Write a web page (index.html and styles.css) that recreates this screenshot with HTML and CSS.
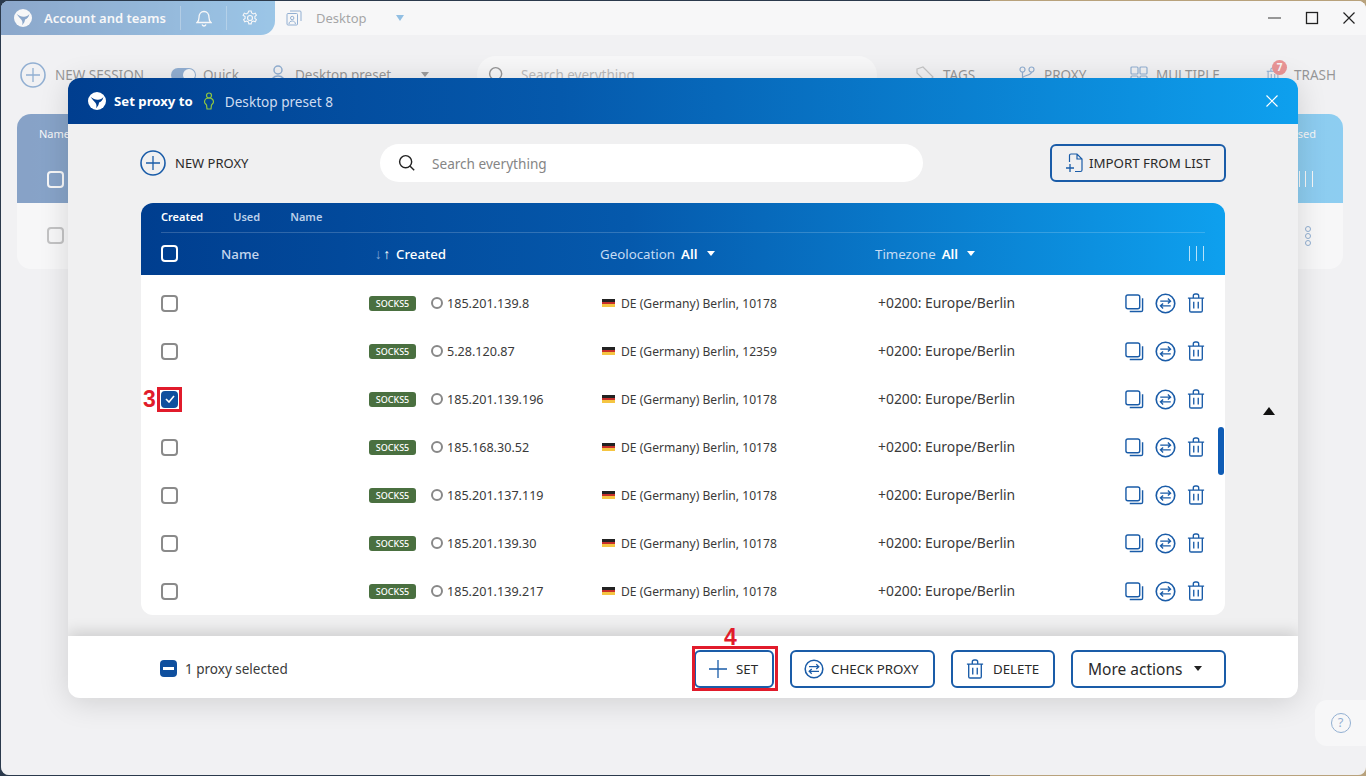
FILE: index.html
```html
<!DOCTYPE html>
<html lang="en">
<head>
<meta charset="utf-8">
<title>Set proxy</title>
<link rel="stylesheet" href="styles.css">
</head>
<body>
<svg class="defs" width="0" height="0" aria-hidden="true">
  <symbol id="logo" viewBox="0 0 24 24">
    <circle cx="12" cy="12" r="12" fill="#fff"/>
    <path d="M3.500 6.500c3 2.200 6 3.400 9 3.800 3.200.3 6-.8 8-3.600-.6 3.600-2.600 6.200-5.800 7.400-.2 2.800-1.400 5.200-4 7.400 1-2.800.8-5-.6-7-1.200-1.800-3.800-3.800-6.600-8z" fill="currentColor"/>
  </symbol>
  <symbol id="plusc" viewBox="0 0 26 26">
    <circle cx="13" cy="13" r="12" fill="none" stroke="currentColor" stroke-width="1.600"/>
    <path d="M13 6v14M6 13h14" fill="none" stroke="currentColor" stroke-width="1.300"/>
  </symbol>
  <symbol id="copy" viewBox="0 0 20 20">
    <rect x="1" y="1" width="14.500" height="14.500" rx="2" fill="none" stroke="currentColor" stroke-width="1.500"/>
    <path d="M18.500 4.500v12.500a1.500 1.500 0 0 1-1.500 1.500H5" fill="none" stroke="currentColor" stroke-width="1.500"/>
  </symbol>
  <symbol id="swap" viewBox="0 0 22 22">
    <circle cx="11" cy="11" r="9.700" fill="none" stroke="currentColor" stroke-width="1.700"/>
    <path d="M5.500 8.500h10.500M13.500 5.700l2.800 2.800-2.800 2.500M16.500 13.500H6M8.500 10.900l-2.800 2.600 2.800 2.800" fill="none" stroke="currentColor" stroke-width="1.400"/>
  </symbol>
  <symbol id="trash" viewBox="0 0 20 22">
    <path d="M1 5.500h18M7 5.500V3.200C7 2 8 1 9.200 1h1.600C12 1 13 2 13 3.200v2.300M3 5.500v14c0 .9.600 1.500 1.500 1.500h11c.9 0 1.500-.6 1.500-1.500v-14M7.500 9.500v7.500M12.500 9.500v7.500" fill="none" stroke="currentColor" stroke-width="1.500"/>
  </symbol>
  <symbol id="search" viewBox="0 0 20 20">
    <circle cx="8.500" cy="8.500" r="6.700" fill="none" stroke="currentColor" stroke-width="1.600"/>
    <path d="M13.500 13.500l4.500 4.500" fill="none" stroke="currentColor" stroke-width="1.600"/>
  </symbol>
</svg>

<div class="window">
  <header class="titlebar">
    <div class="account-tab">
      <svg class="logo-sm"><use href="#logo"/></svg>
      <span class="account-name">Account and teams</span>
      <span class="tab-icon">
        <svg width="16" height="18" viewBox="0 0 16 18"><path d="M1 13.500c1.500-1 2-2.500 2-5 0-3.500 2-6 5-6s5 2.500 5 6c0 2.500.5 4 2 5zM6 15.500c.5 1 1.200 1.500 2 1.500s1.500-.5 2-1.500" fill="none" stroke="#fff" stroke-width="1.300"/></svg>
      </span>
      <span class="tab-icon">
        <svg width="16" height="16" viewBox="0 0 16 16"><circle cx="8" cy="8" r="2.500" fill="none" stroke="#fff" stroke-width="1.200"/><path d="M6.800 1h2.400l.4 2 1.800.9 1.800-.8 1.200 2.100-1.500 1.300v1.900l1.500 1.300-1.200 2.100-1.800-.8-1.800.9-.4 2H6.800l-.4-2-1.800-.9-1.800.8-1.200-2.100 1.500-1.300V6.500L1.100 5.200l1.200-2.100 1.800.8 1.800-.9z" fill="none" stroke="#fff" stroke-width="1.100"/></svg>
      </span>
    </div>
    <div class="desktop-tab">
      <svg class="desktop-icon" width="16" height="16" viewBox="0 0 16 16"><rect x="1" y="3.500" width="10.500" height="11.500" rx="1" fill="none" stroke="#1a5ca8" stroke-width="1"/><path d="M4 1h10a1 1 0 0 1 1 1v9" fill="none" stroke="#1a5ca8" stroke-width="1"/><circle cx="6.200" cy="8" r="1.700" fill="none" stroke="#1a5ca8"/><path d="M3 14c0-2 1.500-3 3.200-3s3.200 1 3.200 3" fill="none" stroke="#1a5ca8"/></svg>
      <span class="desktop-label">Desktop</span>
      <span class="desktop-caret"></span>
    </div>
  </header>

  <div class="toolbar">
    <svg class="tool-plus"><use href="#plusc"/></svg>
    <span class="tool-text tool-new">NEW SESSION</span>
    <span class="toggle"></span>
    <span class="tool-text tool-quick">Quick</span>
    <svg class="tool-person" width="18" height="22" viewBox="0 0 18 22"><circle cx="9" cy="6" r="4" fill="none" stroke="#1a5ca8" stroke-width="1.500"/><path d="M2 21c0-6 3-9 7-9s7 3 7 9" fill="none" stroke="#1a5ca8" stroke-width="1.500"/></svg>
    <span class="tool-text tool-preset">Desktop preset</span>
    <span class="tool-caret"></span>
    <div class="tool-search">
      <svg class="tool-search-icon"><use href="#search"/></svg>
      <span class="tool-search-text">Search everything</span>
    </div>
    <svg class="tool-ic tool-ic-tags" width="18" height="18" viewBox="0 0 18 18"><path d="M1 3l6-2 10 10-6 6L1 7z" fill="none" stroke="#8a8a8a" stroke-width="1.200"/></svg>
    <span class="tool-text tool-tags">TAGS</span>
    <svg class="tool-ic tool-ic-proxy" width="16" height="18" viewBox="0 0 16 18"><circle cx="3.500" cy="3.500" r="2.500" fill="none" stroke="#1a5ca8" stroke-width="1.200"/><circle cx="12.500" cy="3.500" r="2.500" fill="none" stroke="#1a5ca8" stroke-width="1.200"/><path d="M3.500 6v11M12.500 6c0 4-9 3-9 6" fill="none" stroke="#1a5ca8" stroke-width="1.200"/></svg>
    <span class="tool-text tool-proxy">PROXY</span>
    <svg class="tool-ic tool-ic-multi" width="18" height="18" viewBox="0 0 18 18"><rect x="1" y="1" width="7" height="7" rx="1" fill="none" stroke="#1a5ca8" stroke-width="1.200"/><rect x="10" y="1" width="7" height="7" rx="1" fill="none" stroke="#1a5ca8" stroke-width="1.200"/><rect x="1" y="10" width="7" height="7" rx="1" fill="none" stroke="#1a5ca8" stroke-width="1.200"/><rect x="10" y="10" width="7" height="7" rx="1" fill="none" stroke="#1a5ca8" stroke-width="1.200"/></svg>
    <span class="tool-text tool-multi">MULTIPLE</span>
    <span class="tool-trash">
      <svg class="tool-trash-icon" width="14" height="16"><use href="#trash"/></svg>
      <span class="tool-badge">7</span>
    </span>
    <span class="tool-text tool-trash-text">TRASH</span>
  </div>

  <section class="bg-table">
    <div class="bg-head">
      <span class="bg-label">Name</span>
      <span class="bg-label">Used</span>
      <span class="bg-box"></span>
      <span class="bg-bars"></span>
    </div>
    <div class="bg-row">
      <span class="bg-box bg-box-row"></span>
      <span class="bg-dots"><i></i><i></i><i></i></span>
    </div>
  </section>

  <div class="help"><span class="help-mark">?</span></div>

  <div class="scrim"></div>

  <div class="win-controls">
    <svg width="14" height="14" viewBox="0 0 14 14"><path d="M0 7h13" stroke="#777" stroke-width="1.500"/></svg>
    <svg width="14" height="14" viewBox="0 0 14 14"><rect x="1.500" y="1.500" width="11" height="11" fill="none" stroke="#222" stroke-width="1.300"/></svg>
    <svg width="14" height="14" viewBox="0 0 14 14"><path d="M1.500 1.500l11 11M12.500 1.500l-11 11" stroke="#222" stroke-width="1.200"/></svg>
  </div>

  <div class="cursor-mark"></div>

  <main class="modal">
    <div class="modal-head">
      <svg class="logo-md"><use href="#logo"/></svg>
      <span class="modal-title">Set proxy to</span>
      <svg class="modal-person" width="12" height="18" viewBox="0 0 12 18"><circle cx="6" cy="3.500" r="2.500" fill="none" stroke="#8fc640" stroke-width="1.200"/><path d="M6 6c-3 0-4.500 2-4.500 4 0 1.500 1.500 2 2 3l.5 4h4l.5-4c.5-1 2-1.500 2-3 0-2-1.500-4-4.500-4z" fill="none" stroke="#8fc640" stroke-width="1.200"/></svg>
      <span class="modal-preset">Desktop preset 8</span>
      <svg class="modal-close" width="14" height="14" viewBox="0 0 14 14"><path d="M1.500 1.500l11 11M12.500 1.500l-11 11" stroke="#fff" stroke-width="1.200"/></svg>
    </div>

    <div class="modal-body">
      <div class="proxy-tools">
        <div class="new-proxy">
          <svg class="new-proxy-icon"><use href="#plusc"/></svg>
          <span>NEW PROXY</span>
        </div>
        <div class="search">
          <svg class="search-icon"><use href="#search"/></svg>
          <span>Search everything</span>
        </div>
        <div class="btn btn-import">
          <svg width="18" height="20" viewBox="0 0 18 20"><path d="M6 1h6l5 5v11a1.500 1.500 0 0 1-1.500 1.500H10M12 1v5h5M6 1a1.500 1.500 0 0 0-1.500 1.500V9" fill="none" stroke="#1a5ca8" stroke-width="1.200"/><path d="M5 11v8M1 15h8" fill="none" stroke="#1a5ca8" stroke-width="1.300"/></svg>
          <span>IMPORT FROM LIST</span>
        </div>
      </div>

      <section class="table">
        <div class="table-head">
          <div class="sort-tabs">
            <span class="sort-tab sort-active">Created</span>
            <span class="sort-tab">Used</span>
            <span class="sort-tab">Name</span>
          </div>
          <div class="row head-row">
            <span class="check check-head"></span>
            <span class="col-label">Name</span>
            <span class="col-created"><span class="arrow arrow-dim">↓</span><span class="arrow">↑</span><b>Created</b></span>
            <span class="col-filter">Geolocation<b>All</b><i class="tri"></i></span>
            <span class="col-filter">Timezone<b>All</b><i class="tri"></i></span>
            <span class="bars"><i></i><i></i><i></i></span>
          </div>
        </div>

        <div class="table-rows">
          <div class="row">
            <span class="check"></span><span></span>
            <span class="cell-proxy"><span class="badge">SOCKS5</span><i class="radio"></i>185.201.139.8</span>
            <span class="cell-geo"><i class="flag"></i>DE (Germany) Berlin, 10178</span>
            <span class="cell-tz">+0200: Europe/Berlin</span>
            <span class="actions"><svg class="a-copy"><use href="#copy"/></svg><svg class="a-swap"><use href="#swap"/></svg><svg class="a-trash"><use href="#trash"/></svg></span>
          </div>
          <div class="row">
            <span class="check"></span><span></span>
            <span class="cell-proxy"><span class="badge">SOCKS5</span><i class="radio"></i>5.28.120.87</span>
            <span class="cell-geo"><i class="flag"></i>DE (Germany) Berlin, 12359</span>
            <span class="cell-tz">+0200: Europe/Berlin</span>
            <span class="actions"><svg class="a-copy"><use href="#copy"/></svg><svg class="a-swap"><use href="#swap"/></svg><svg class="a-trash"><use href="#trash"/></svg></span>
          </div>
          <div class="row">
            <span class="check check-on">
              <svg width="10" height="8" viewBox="0 0 10 8"><path d="M1 4l3 3 5-6" fill="none" stroke="#fff" stroke-width="1.600"/></svg>
              <span class="step step-3">3</span>
            </span><span></span>
            <span class="cell-proxy"><span class="badge">SOCKS5</span><i class="radio"></i>185.201.139.196</span>
            <span class="cell-geo"><i class="flag"></i>DE (Germany) Berlin, 10178</span>
            <span class="cell-tz">+0200: Europe/Berlin</span>
            <span class="actions"><svg class="a-copy"><use href="#copy"/></svg><svg class="a-swap"><use href="#swap"/></svg><svg class="a-trash"><use href="#trash"/></svg></span>
          </div>
          <div class="row">
            <span class="check"></span><span></span>
            <span class="cell-proxy"><span class="badge">SOCKS5</span><i class="radio"></i>185.168.30.52</span>
            <span class="cell-geo"><i class="flag"></i>DE (Germany) Berlin, 10178</span>
            <span class="cell-tz">+0200: Europe/Berlin</span>
            <span class="actions"><svg class="a-copy"><use href="#copy"/></svg><svg class="a-swap"><use href="#swap"/></svg><svg class="a-trash"><use href="#trash"/></svg></span>
          </div>
          <div class="row">
            <span class="check"></span><span></span>
            <span class="cell-proxy"><span class="badge">SOCKS5</span><i class="radio"></i>185.201.137.119</span>
            <span class="cell-geo"><i class="flag"></i>DE (Germany) Berlin, 10178</span>
            <span class="cell-tz">+0200: Europe/Berlin</span>
            <span class="actions"><svg class="a-copy"><use href="#copy"/></svg><svg class="a-swap"><use href="#swap"/></svg><svg class="a-trash"><use href="#trash"/></svg></span>
          </div>
          <div class="row">
            <span class="check"></span><span></span>
            <span class="cell-proxy"><span class="badge">SOCKS5</span><i class="radio"></i>185.201.139.30</span>
            <span class="cell-geo"><i class="flag"></i>DE (Germany) Berlin, 10178</span>
            <span class="cell-tz">+0200: Europe/Berlin</span>
            <span class="actions"><svg class="a-copy"><use href="#copy"/></svg><svg class="a-swap"><use href="#swap"/></svg><svg class="a-trash"><use href="#trash"/></svg></span>
          </div>
          <div class="row">
            <span class="check"></span><span></span>
            <span class="cell-proxy"><span class="badge">SOCKS5</span><i class="radio"></i>185.201.139.217</span>
            <span class="cell-geo"><i class="flag"></i>DE (Germany) Berlin, 10178</span>
            <span class="cell-tz">+0200: Europe/Berlin</span>
            <span class="actions"><svg class="a-copy"><use href="#copy"/></svg><svg class="a-swap"><use href="#swap"/></svg><svg class="a-trash"><use href="#trash"/></svg></span>
          </div>
          <div class="scrollbar"></div>
        </div>
      </section>
    </div>

    <footer class="modal-foot">
      <div class="selected">
        <span class="check-minus"><i></i></span>
        <span>1 proxy selected</span>
      </div>
      <div class="foot-actions">
        <div class="btn btn-set">
          <svg width="18" height="18" viewBox="0 0 18 18"><path d="M9 0v18M0 9h18" fill="none" stroke="#1a5ca8" stroke-width="1.300"/></svg>
          <span>SET</span>
          <span class="step step-4">4</span>
        </div>
        <div class="btn btn-check">
          <svg width="20" height="20"><use href="#swap"/></svg>
          <span>CHECK PROXY</span>
        </div>
        <div class="btn btn-delete">
          <svg width="18" height="20"><use href="#trash"/></svg>
          <span>DELETE</span>
        </div>
        <div class="btn btn-more">
          <span>More actions</span>
          <i class="tri tri-dark"></i>
        </div>
      </div>
    </footer>
  </main>
</div>
</body>
</html>
```

FILE: styles.css
```css
*, *::before, *::after { box-sizing: border-box; }
html, body { margin: 0; height: 100%; }
body {
  width: 1366px;
  height: 776px;
  overflow: hidden;
  padding: 1px 0 1px 1px;
  background: linear-gradient(90deg, #2b3a4c 0, #2b3a4c 990px, #b8a27c 990px, #b8a27c 100%);
  font-family: "Noto Sans", "Liberation Sans", sans-serif;
  color: #333;
}
.defs { position: absolute; }
i { font-style: normal; display: block; }
b { font-weight: 600; }

.window {
  position: relative;
  width: 1365px;
  height: 774px;
  border-radius: 8px;
  overflow: hidden;
  background: #f1f2f3;
}

/* title bar (behind the dialog) */
.titlebar { display: flex; height: 34px; background: #fff; }
.account-tab {
  display: flex;
  align-items: center;
  width: 274px;
  padding-left: 13px;
  color: #fff;
  background: linear-gradient(90deg, #0b4a98, #2f8fd8);
  border-radius: 0 0 14px 0;
  font-size: 13px;
  font-weight: 600;
}
.logo-sm { width: 18px; height: 18px; color: #0b4a98; flex: none; }
.account-name { margin-left: 12px; width: 136px; }
.tab-icon {
  display: flex;
  justify-content: center;
  width: 46px;
  border-left: 1px solid rgba(255,255,255,.3);
  height: 24px;
  align-items: center;
}
.desktop-tab { display: flex; align-items: center; padding-left: 11px; font-size: 13px; }
.desktop-label { margin-left: 14px; color: #444; }
.desktop-caret {
  margin-left: 29px;
  border-left: 4px solid transparent;
  border-right: 4px solid transparent;
  border-top: 6px solid #1a7fd0;
}

/* main toolbar (behind the dialog) */
.toolbar {
  display: flex;
  align-items: center;
  height: 79px;
  padding-left: 19px;
  font-size: 13.500px;
  color: #222;
}
.tool-text { white-space: nowrap; }
.tool-plus { width: 26px; height: 26px; color: #1a5ca8; flex: none; }
.tool-new { margin-left: 9px; width: 116px; }
.toggle {
  position: relative;
  width: 25px;
  height: 14px;
  border-radius: 8px;
  background: #1a5ca8;
}
.toggle::after {
  content: "";
  position: absolute;
  right: 1px;
  top: 1px;
  width: 12px;
  height: 12px;
  border-radius: 50%;
  background: #fff;
}
.tool-quick { margin-left: 7px; width: 66px; }
.tool-person { flex: none; }
.tool-preset { margin-left: 8px; width: 126px; }
.tool-caret {
  border-left: 4px solid transparent;
  border-right: 4px solid transparent;
  border-top: 5px solid #333;
}
.tool-search {
  display: flex;
  align-items: center;
  width: 400px;
  height: 38px;
  margin-left: 48px;
  padding-left: 11px;
  border-radius: 19px;
  background: #fff;
  color: #777;
}
.tool-search-icon { width: 18px; height: 18px; color: #222; }
.tool-search-text { margin-left: 15px; }
.tool-ic { flex: none; }
.tool-ic-tags { margin-left: 39px; }
.tool-tags { margin-left: 9px; width: 76px; }
.tool-proxy { margin-left: 9px; width: 86px; }
.tool-multi { margin-left: 8px; width: 64px; }
.tool-trash { position: relative; margin-left: 46px; width: 28px; height: 16px; flex: none; }
.tool-trash-icon { color: #1a5ca8; }
.tool-badge {
  position: absolute;
  left: 6px;
  top: -7px;
  width: 15px;
  height: 15px;
  border-radius: 50%;
  background: #e02020;
  color: #fff;
  font-size: 10px;
  font-weight: 700;
  line-height: 15px;
  text-align: center;
}

/* list behind the dialog */
.bg-table {
  width: 1326px;
  height: 155px;
  margin-left: 16px;
  border-radius: 14px;
  background: #fff;
  overflow: hidden;
}
.bg-head {
  display: flex;
  justify-content: space-between;
  align-items: flex-start;
  position: relative;
  height: 89px;
  padding: 12px 27px 0 22px;
  background: linear-gradient(90deg, #003e8f, #0ea0ee);
  color: #fff;
  font-size: 11px;
}
.bg-box {
  position: absolute;
  left: 30px;
  top: 57px;
  width: 17px;
  height: 17px;
  border: 2px solid #fff;
  border-radius: 4px;
}
.bg-bars {
  position: absolute;
  right: 30px;
  top: 57px;
  width: 14px;
  height: 16px;
  border-left: 1px solid #fff;
  border-right: 1px solid #fff;
}
.bg-bars::after {
  content: "";
  position: absolute;
  left: 5px;
  top: 0;
  width: 1px;
  height: 16px;
  background: #fff;
}
.bg-row { position: relative; height: 66px; }
.bg-box-row { top: 24px; border-color: #888; }
.bg-dots { position: absolute; right: 32px; top: 23px; display: flex; flex-direction: column; gap: 1px; }
.bg-dots i { width: 6px; height: 6px; border: 1.500px solid #1a5ca8; border-radius: 50%; }

.help {
  position: absolute;
  right: 0;
  top: 699px;
  width: 51px;
  height: 46px;
  display: flex;
  align-items: center;
  justify-content: center;
  background: #fff;
  border-radius: 12px 0 0 12px;
}
.help-mark {
  width: 20px;
  height: 20px;
  border: 1.500px solid #1a5ca8;
  border-radius: 50%;
  color: #1a5ca8;
  font-size: 13px;
  line-height: 17px;
  text-align: center;
}

.scrim { position: absolute; inset: 0; background: rgba(240,241,242,.56); }

.win-controls {
  position: absolute;
  right: 0;
  top: 0;
  height: 34px;
  padding-right: 10px;
  display: flex;
  align-items: center;
  gap: 23px;
}

.cursor-mark {
  position: absolute;
  z-index: 3;
  left: 1262px;
  top: 406px;
  border-left: 6px solid transparent;
  border-right: 6px solid transparent;
  border-bottom: 8px solid #111;
}

/* dialog */
.modal {
  position: absolute;
  left: 67px;
  top: 77px;
  width: 1230px;
  height: 620px;
  display: flex;
  flex-direction: column;
  border-radius: 12px;
  overflow: hidden;
  background: #f0f0f1;
  box-shadow: 0 4px 30px rgba(0,0,0,.14);
}
.modal-head {
  display: flex;
  align-items: center;
  height: 46px;
  flex: none;
  padding-left: 20px;
  padding-right: 19px;
  color: #fff;
  background: linear-gradient(90deg, #003e8f 0, #0559ac 40%, #0ea0ee 100%);
}
.logo-md { width: 18px; height: 18px; color: #003e8f; flex: none; }
.modal-title { margin-left: 8px; font-size: 13.200px; font-weight: 700; }
.modal-person { margin-left: 10px; }
.modal-preset { margin-left: 10px; font-size: 13.600px; color: #cfdcf0; }
.modal-close { margin-left: auto; }

.modal-body { flex: 1; min-height: 0; padding: 20px 73px 0 73px; }
.proxy-tools { display: flex; align-items: center; height: 38px; margin-right: -1px; }
.new-proxy {
  display: flex;
  align-items: center;
  width: 240px;
  margin-left: -1px;
  font-size: 13px;
  color: #2a2a2a;
}
.new-proxy-icon { width: 26px; height: 26px; color: #1a5ca8; margin-right: 9px; flex: none; }
.search {
  display: flex;
  align-items: center;
  width: 543px;
  height: 38px;
  padding-left: 18px;
  border-radius: 19px;
  background: #fff;
  color: #858585;
  font-size: 13.600px;
}
.search-icon { width: 18px; height: 18px; color: #222; margin-right: 16px; }
.btn {
  display: flex;
  align-items: center;
  height: 38px;
  border: 2px solid #1a5ca8;
  border-radius: 6px;
  color: #2a2a2a;
  white-space: nowrap;
}
.btn svg { color: #1a5ca8; flex: none; }
.btn-import {
  width: 176px;
  margin-left: auto;
  padding-left: 13px;
  gap: 6px;
  font-size: 13.300px;
}

.table { margin-top: 21px; border-radius: 12px; overflow: hidden; background: #fff; }
.table-head {
  height: 72px;
  padding: 0 20px;
  color: #fff;
  background: linear-gradient(90deg, #003e8f 0, #0559ac 45%, #0ea0ee 100%);
}
.sort-tabs {
  display: flex;
  align-items: center;
  height: 30px;
  padding-bottom: 2px;
  border-bottom: 1px solid rgba(255,255,255,.18);
  font-size: 11px;
  font-weight: 600;
}
.sort-tab { color: #bcd0ea; margin-right: 30px; }
.sort-active { color: #fff; }
.row {
  display: grid;
  grid-template-columns: 60px 148px 231px 275px 250px 1fr;
  align-items: center;
  height: 48px;
  padding-left: 20px;
  font-size: 12.600px;
}
.head-row {
  height: 42px;
  padding-left: 0;
  padding-bottom: 1px;
  font-size: 13.300px;
}
.col-label { color: #c5d6ee; font-weight: 500; }
.col-created { padding-left: 5px; display: flex; align-items: center; }
.arrow { width: 8.500px; font-size: 14px; text-align: center; }
.col-created b { margin-left: 5px; font-weight: 500; }
.arrow-dim { color: #7ea5d6; }
.col-filter { display: flex; align-items: center; color: #c5dcf4; white-space: pre; }
.col-filter b { color: #fff; margin-left: 6px; }
.tri {
  margin-left: 9px;
  border-left: 4px solid transparent;
  border-right: 4px solid transparent;
  border-top: 5px solid #fff;
}
.bars { display: flex; justify-content: flex-end; gap: 6px; margin-right: 1px; }
.bars i { width: 1px; height: 15px; background: rgba(255,255,255,.7); }

.check {
  position: relative;
  display: flex;
  align-items: center;
  justify-content: center;
  width: 17px;
  height: 17px;
  border: 2px solid #8a8a8a;
  border-radius: 4px;
  background: #fff;
}
.check-head { border-color: #fff; background: transparent; }
.check-on { border-color: #0f4f9e; background: #0f4f9e; }
.check-on::after {
  content: "";
  position: absolute;
  left: -6px;
  top: -6px;
  width: 25px;
  height: 25px;
  border: 3px solid #e11b2b;
}
.step {
  position: absolute;
  color: #e11b2b;
  font-size: 23px;
  font-weight: 700;
  line-height: 1;
  font-family: "Liberation Sans", sans-serif;
}
.step-3 { left: -20px; top: -5px; }
.step-4 { left: 28px; top: -26px; }

.table-rows { position: relative; height: 340px; padding-top: 4px; }
.cell-proxy { display: flex; align-items: center; color: #3a3a3a; }
.badge {
  width: 47px;
  height: 15px;
  margin-right: 15px;
  border-radius: 3px;
  background: #4a7040;
  color: #fff;
  font-size: 9px;
  font-weight: 500;
  line-height: 15px;
  text-align: center;
}
.radio {
  width: 12px;
  height: 12px;
  margin-right: 4px;
  border: 2px solid #888;
  border-radius: 50%;
}
.cell-geo { display: flex; align-items: center; color: #3a3a3a; padding-left: 2px; font-size: 12.100px; }
.flag {
  width: 13px;
  height: 8px;
  margin-right: 6px;
  background: linear-gradient(#222 0, #222 33%, #c8302a 33%, #c8302a 66%, #f5c542 66%, #f5c542 100%);
}
.cell-tz { padding-left: 3px; color: #3a3a3a; font-size: 13.900px; line-height: 18px; padding-bottom: 1px; }
.actions { display: flex; align-items: center; color: #1a5ca8; }
.a-copy { width: 19px; height: 19px; flex: none; }
.a-swap { width: 21px; height: 21px; margin-left: 11px; flex: none; }
.a-trash { width: 18px; height: 20px; margin-left: 11px; flex: none; }
.scrollbar {
  position: absolute;
  right: 1px;
  top: 152px;
  width: 6px;
  height: 48px;
  border-radius: 3px;
  background: #0f5cb5;
}

.modal-foot {
  position: relative;
  display: flex;
  align-items: center;
  justify-content: space-between;
  flex: none;
  height: 62px;
  padding: 3px 72px 0 92px;
  background: #fff;
  box-shadow: 0 -4px 14px rgba(0,0,0,.15);
}
.selected { display: flex; align-items: center; gap: 8px; font-size: 13.500px; color: #3a3a3a; }
.check-minus {
  display: flex;
  align-items: center;
  justify-content: center;
  width: 17px;
  height: 17px;
  border-radius: 4px;
  background: #0f4f9e;
}
.check-minus i { width: 11px; height: 3px; background: #fff; }
.foot-actions { display: flex; align-items: center; }
.btn-set {
  position: relative;
  width: 80px;
  padding-left: 13px;
  gap: 9px;
  font-size: 13.300px;
}
.btn-set::after {
  content: "";
  position: absolute;
  left: -4px;
  top: -6px;
  width: 86px;
  height: 45px;
  border: 3px solid #e11b2b;
}
.btn-check {
  width: 145px;
  margin-left: 16px;
  padding-left: 12px;
  gap: 7px;
  font-size: 13.300px;
}
.btn-delete {
  width: 104px;
  margin-left: 16px;
  padding-left: 13px;
  gap: 9px;
  font-size: 13.300px;
}
.btn-more {
  width: 155px;
  margin-left: 16px;
  padding-left: 15px;
  font-size: 15.500px;
}
.tri-dark { margin-left: 12px; border-top-color: #222; }
```
